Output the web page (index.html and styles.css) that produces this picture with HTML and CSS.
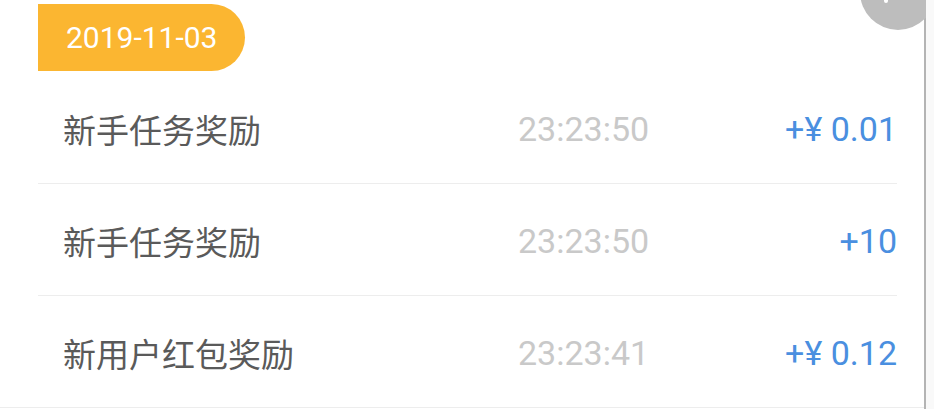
FILE: index.html
```html
<!DOCTYPE html>
<html lang="zh-CN">
<head>
<meta charset="utf-8">
<title>奖励明细</title>
<link rel="stylesheet" href="styles.css">
</head>
<body>
<div class="frame">
  <main class="content">
    <div class="date-head">
      <span class="badge">2019-11-03</span>
    </div>
    <ul class="records">
      <li class="record">
        <span class="title">新手任务奖励</span>
        <span class="time">23:23:50</span>
        <span class="amount">+¥ 0.01</span>
      </li>
      <li class="record">
        <span class="title">新手任务奖励</span>
        <span class="time">23:23:50</span>
        <span class="amount">+10</span>
      </li>
      <li class="record">
        <span class="title">新用户红包奖励</span>
        <span class="time">23:23:41</span>
        <span class="amount">+¥ 0.12</span>
      </li>
    </ul>
  </main>
  <div class="edge"></div>
  <div class="fab"><span class="fab-dot"></span></div>
</div>
</body>
</html>
```
FILE: styles.css
```css
* { box-sizing: border-box; }
html, body {
  margin: 0;
  padding: 0;
  background: #ffffff;
}
body {
  font-family: Roboto, "Noto Sans CJK SC", sans-serif;
  width: 934px;
  height: 409px;
  overflow: hidden;
}
.frame {
  position: relative;
  display: flex;
  width: 934px;
  height: 409px;
}
.content {
  width: 924px;
  flex: none;
}
.edge {
  width: 2px;
  flex: none;
  background: #b4b4b4;
}
.frame::after {
  content: "";
  flex: 1;
  background: #f9f9f9;
}
.date-head {
  padding-top: 4px;
  padding-left: 38px;
  height: 72px;
}
.badge {
  display: inline-flex;
  align-items: center;
  height: 67px;
  width: 207px;
  padding-left: 28px;
  background: #fbb631;
  color: #ffffff;
  font-size: 30px;
  border-radius: 0 34px 34px 0;
}
.records {
  list-style: none;
  margin: 0;
  padding: 0 27px 0 38px;
  border-bottom: 1px solid #ededed;
}
.record {
  display: grid;
  grid-template-columns: 480px 1fr auto;
  align-items: center;
  height: 112px;
  padding-top: 2px;
  border-bottom: 1px solid #ededed;
  font-size: 33px;
}
.record:last-child {
  border-bottom: none;
  height: 111px;
}
.title {
  padding-left: 25px;
  color: #5a5a5a;
}
.time {
  color: #c9c9c9;
  font-size: 34px;
}
.amount {
  color: #4a8fe0;
  font-size: 34px;
  text-align: right;
}
.fab {
  position: absolute;
  left: 860px;
  top: -46px;
  width: 76px;
  height: 76px;
  border-radius: 50%;
  background: #bdbdbd;
  clip-path: inset(0 10px 0 0);
}
.fab-dot {
  position: absolute;
  left: 24px;
  top: 44px;
  width: 4px;
  height: 5px;
  border-radius: 2px;
  background: #ffffff;
}
```
